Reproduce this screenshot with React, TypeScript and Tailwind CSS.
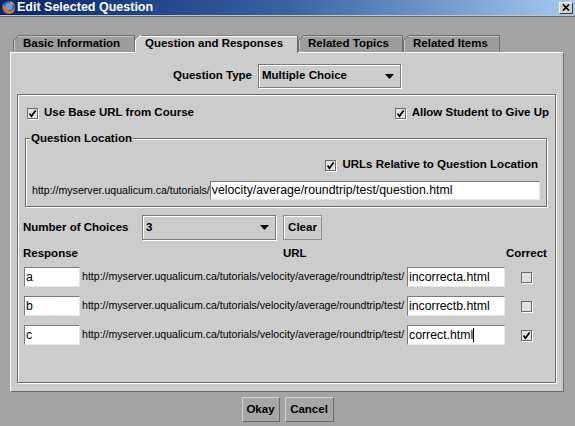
import React from 'react';

const font = "font-['Liberation_Sans',Arial,sans-serif]";

function CheckBox({ checked }: { checked?: boolean }) {
  return (
    <div className="w-[11px] h-[11px] shrink-0 border border-[#6b6b6b] bg-[#e2e2e2] shadow-[1px_1px_0_#ffffff] flex items-center justify-center">
      {checked && (
        <svg width="9" height="9" viewBox="0 0 9 9">
          <path d="M1.6 4.6 L3.4 7.2 L7.6 1.4" fill="none" stroke="#000" strokeWidth="1.7" />
        </svg>
      )}
    </div>
  );
}

function TextBox({ value, className, caret }: { value: string; className: string; caret?: boolean }) {
  return (
    <div
      className={`${className} shrink-0 bg-white border border-t-[#7a7a7a] border-l-[#7a7a7a] border-r-[#e6e6e6] border-b-[#e6e6e6] text-[12.3px] text-black leading-none flex items-center pl-[1px] whitespace-nowrap overflow-hidden`}
    >
      {value}
      {caret && <span className="inline-block w-[1px] h-[14px] bg-black" />}
    </div>
  );
}

function Combo({ value, className }: { value: string; className: string }) {
  return (
    <div
      className={`${className} shrink-0 border border-[#7c7c7c] shadow-[inset_1px_1px_0_#ffffff,1px_1px_0_#ffffff] bg-[#cccccc] flex items-center justify-between pl-[3px] pr-[6px] text-[11.5px] font-bold text-black`}
    >
      <span>{value}</span>
      <svg width="9" height="5" viewBox="0 0 9 5">
        <path d="M0 0 H9 L4.5 5 Z" fill="#000" />
      </svg>
    </div>
  );
}

function Tab({ label, width, selected }: { label: string; width: string; selected?: boolean }) {
  return (
    <div
      className={`${width} relative shrink-0 flex items-center pl-[9px] text-[11.5px] font-bold text-black border-t border-l border-r ${
        selected
          ? 'z-10 h-[18px] bg-[#cccccc] border-t-[#808080] border-l-white border-r-[#6a6a6a] shadow-[inset_0_1px_0_#ffffff]'
          : 'h-[17px] bg-[#9d9d9d] border-t-[#6e6e6e] border-l-[#6e6e6e] border-r-[#6e6e6e] shadow-[inset_1px_1px_0_#c4c4c4]'
      }`}
    >
      <svg className="absolute -left-[1px] -top-[1px]" width="6" height="6" viewBox="0 0 6 6">
        <path d="M0 0 H6 L0 6 Z" fill="#a3a3a3" />
        <path d="M0 6 L6 0" stroke={selected ? '#ffffff' : '#6e6e6e'} strokeWidth="1" />
      </svg>
      <span className={selected ? '-mt-[1px]' : ''}>{label}</span>
    </div>
  );
}

function FirefoxIcon() {
  return (
    <svg width="15" height="15" viewBox="0 0 16 16">
      <circle cx="8" cy="8" r="7" fill="#2f5da8" />
      <circle cx="8.5" cy="7" r="4" fill="#6d9bd8" />
      <path
        d="M2 5 C1 10 5 15 10 14.5 C13.5 14 15.5 10.5 15 7 C14.2 10 12 12 9 11.6 C6 11.3 4.5 9 5 6.5 C4 7 3.5 6.5 3.6 5.2 C3 5.7 2.5 5.6 2 5 Z"
        fill="#e8731c"
      />
      <path d="M10 1.3 C12.5 2 14.5 4 15 6.5 C13.5 4.5 12 3.5 10 3.5 Z" fill="#f5a623" />
    </svg>
  );
}

const base = 'http://myserver.uqualicum.ca/tutorials/';
const rowBase = base + 'velocity/average/roundtrip/test/';

const rows = [
  { resp: 'a', file: 'incorrecta.html', correct: false },
  { resp: 'b', file: 'incorrectb.html', correct: false },
  { resp: 'c', file: 'correct.html', correct: true, caret: true },
];

const label = 'text-[11.5px] font-bold text-black';

export default function App() {
  return (
    <div className={`${font} w-[575px] h-[426px] bg-[#a3a3a3] flex flex-col overflow-hidden select-none`}>
      {/* title bar */}
      <div className="h-[15px] flex items-center bg-gradient-to-r from-[#0a246a] via-[#3a63a4] to-[#a6caf0] relative">
        <div className="w-[16px] flex justify-center">
          <FirefoxIcon />
        </div>
        <span className="ml-[1px] text-[12.5px] font-bold text-white leading-none">Edit Selected Question</span>
        <div className="ml-auto mr-[2px] w-[14px] h-[12px] bg-[#d4d0c8] border border-t-white border-l-white border-r-[#404040] border-b-[#404040] flex items-center justify-center">
          <svg width="8" height="7" viewBox="0 0 8 7">
            <path d="M1 0.5 L7 6.5 M7 0.5 L1 6.5" stroke="#000" strokeWidth="1.6" />
          </svg>
        </div>
      </div>
      <div className="h-[2px] border-t border-t-[#c4c4c4] border-b border-b-[#6f6f6f]" />

      <div className="pl-[10px] pt-[18px]">
        {/* tabs */}
        <div className="h-[17px] flex items-start pl-[3px]">
          <Tab label="Basic Information" width="w-[122px]" />
          <Tab label="Question and Responses" width="w-[163px]" selected />
          <Tab label="Related Topics" width="w-[105px]" />
          <Tab label="Related Items" width="w-[97px]" />
        </div>

        {/* panel */}
        <div className="w-[554px] h-[340px] bg-[#cccccc] border border-t-white border-l-white border-r-[#6a6a6a] border-b-[#6a6a6a] flex flex-col">
          <div className="mt-[11px] h-[24px] flex items-center justify-center gap-[6px]">
            <span className={label}>Question Type</span>
            <Combo value="Multiple Choice" className="w-[143px] h-[24px]" />
          </div>

          <div className="mt-[6px] ml-[6px] w-[539px] h-[289px] border border-[#6e6e6e] shadow-[inset_1px_1px_0_#ffffff,1px_1px_0_#ffffff] flex flex-col">
            <div className="mt-[11px] h-[14px] flex items-center justify-between pl-[9px] pr-[6px]">
              <div className="flex items-center gap-[6px]">
                <CheckBox checked />
                <span className={label}>Use Base URL from Course</span>
              </div>
              <div className="flex items-center gap-[6px]">
                <CheckBox checked />
                <span className={label}>Allow Student to Give Up</span>
              </div>
            </div>

            <fieldset className="mt-[11px] ml-[7px] w-[522px] h-[76px] border border-[#6e6e6e] shadow-[inset_1px_1px_0_#ffffff,1px_1px_0_#ffffff]">
              <legend className={`ml-[4px] px-[1px] bg-[#cccccc] leading-[14px] ${label}`}>
                Question Location
              </legend>
              <div className="mt-[13px] h-[14px] flex items-center justify-end gap-[6px] pr-[8px]">
                <CheckBox checked />
                <span className={label}>URLs Relative to Question Location</span>
              </div>
              <div className="mt-[9px] flex items-center pl-[6px]">
                <span className="text-[10.6px] text-black whitespace-nowrap">{base}</span>
                <TextBox value="velocity/average/roundtrip/test/question.html" className="w-[330px] h-[19px]" />
              </div>
            </fieldset>

            <div className="mt-[8px] flex items-center pl-[5px]">
              <span className={`w-[119px] ${label}`}>Number of Choices</span>
              <Combo value="3" className="w-[134px] h-[25px]" />
              <div className={`ml-[7px] w-[39px] h-[25px] border border-[#8e8e8e] shadow-[inset_1px_1px_0_#ffffff] bg-[#cccccc] flex items-center justify-center ${label}`}>
                Clear
              </div>
            </div>

            <div className={`mt-[7px] h-[14px] flex items-center pl-[5px] ${label}`}>
              <span className="w-[260px]">Response</span>
              <span className="w-[223px]">URL</span>
              <span>Correct</span>
            </div>

            <div className="mt-[6px] flex flex-col gap-[9px] pl-[6px]">
              {rows.map((r) => (
                <div key={r.resp} className="h-[20px] flex items-center">
                  <TextBox value={r.resp} className="w-[56px] h-[20px]" />
                  <span className="ml-[2px] w-[325px] text-[10.6px] text-black whitespace-nowrap">{rowBase}</span>
                  <TextBox value={r.file} caret={r.caret} className="w-[98px] h-[20px]" />
                  <div className="ml-[16px]">
                    <CheckBox checked={r.correct} />
                  </div>
                </div>
              ))}
            </div>
          </div>
        </div>
      </div>

      {/* dialog buttons */}
      <div className="mt-[5px] flex justify-center gap-[5px]">
        <div className={`w-[38px] h-[25px] bg-[#a6a6a6] border border-t-[#d0d0d0] border-l-[#d0d0d0] border-r-[#6a6a6a] border-b-[#6a6a6a] flex items-center justify-center ${label}`}>
          Okay
        </div>
        <div className={`w-[49px] h-[25px] bg-[#a6a6a6] border border-t-[#d0d0d0] border-l-[#d0d0d0] border-r-[#6a6a6a] border-b-[#6a6a6a] flex items-center justify-center ${label}`}>
          Cancel
        </div>
      </div>
    </div>
  );
}
